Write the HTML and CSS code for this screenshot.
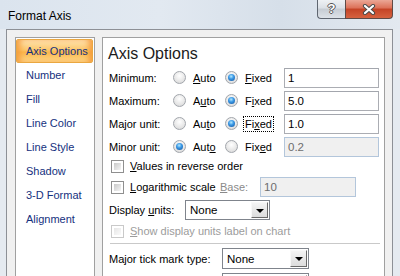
FILE: index.html
```html
<!DOCTYPE html>
<html>
<head>
    <meta name="viewport" content="width=device-width, initial-scale=1">
    <link rel="stylesheet" href="styles.css">
</head>
<body>

<div class="window">
    <div class="titlebar">
        <span class="title">Format Axis</span>
        <div class="caption-buttons">
            <span class="btn-help">?</span>
            <span class="btn-close">
                <svg width="14" height="11" viewBox="0 0 14 11">
                    <path d="M3 2 L11 9 M11 2 L3 9" stroke="#4a4a4a" stroke-width="4.2" stroke-linecap="round" fill="none"/>
                    <path d="M3 2 L11 9 M11 2 L3 9" stroke="#ffffff" stroke-width="2.2" stroke-linecap="round" fill="none"/>
                </svg>
            </span>
        </div>
    </div>

    <div class="client">
        <ul class="nav">
            <li class="active">Axis Options</li>
            <li>Number</li>
            <li>Fill</li>
            <li>Line Color</li>
            <li>Line Style</li>
            <li>Shadow</li>
            <li>3-D Format</li>
            <li>Alignment</li>
        </ul>

        <div class="panel">
            <div class="panel-title">Axis Options</div>

            <div class="bounds">
                <span class="lbl">Minimum:</span>
                <span class="radio"></span>
                <span class="opt-auto"><u>A</u>uto</span>
                <span class="radio on"></span>
                <span class="opt-fixed"><span><u>F</u>ixed</span></span>
                <span class="field">1</span>

                <span class="lbl">Maximum:</span>
                <span class="radio"></span>
                <span class="opt-auto">A<u>u</u>to</span>
                <span class="radio on"></span>
                <span class="opt-fixed"><span>F<u>i</u>xed</span></span>
                <span class="field">5.0</span>

                <span class="lbl">Major unit:</span>
                <span class="radio"></span>
                <span class="opt-auto">Au<u>t</u>o</span>
                <span class="radio on"></span>
                <span class="opt-fixed"><span class="focus">Fi<u>x</u>ed</span></span>
                <span class="field">1.0</span>

                <span class="lbl">Minor unit:</span>
                <span class="radio on"></span>
                <span class="opt-auto">Aut<u>o</u></span>
                <span class="radio"></span>
                <span class="opt-fixed"><span>Fix<u>e</u>d</span></span>
                <span class="field disabled">0.2</span>
            </div>

            <div class="row row-values">
                <span class="check"></span>
                <span><u>V</u>alues in reverse order</span>
            </div>

            <div class="row row-log">
                <span class="check"></span>
                <span class="log-text"><u>L</u>ogarithmic scale</span>
                <span class="base-lbl"><u>B</u>ase:</span>
                <span class="field disabled base-field">10</span>
            </div>

            <div class="row row-units">
                <span class="units-lbl">Display <u>u</u>nits:</span>
                <span class="select units-select">
                    <span class="select-text">None</span>
                    <span class="select-btn"></span>
                </span>
            </div>

            <div class="row row-show">
                <span class="check off"></span>
                <span class="muted"><u>S</u>how display units label on chart</span>
            </div>

            <div class="separator"></div>

            <div class="row row-tick">
                <span class="tick-lbl">Ma<u>j</u>or tick mark type:</span>
                <span class="select tick-select">
                    <span class="select-text">None</span>
                    <span class="select-btn"></span>
                </span>
            </div>

            <!-- next row only peeks in at the bottom edge -->
            <div class="row row-tick">
                <span class="tick-lbl"></span>
                <span class="select tick-select">
                    <span class="select-text"></span>
                    <span class="select-btn"></span>
                </span>
            </div>
        </div>
    </div>
</div>

</body>
</html>
```

FILE: styles.css
```css
* {box-sizing: border-box;}
body {
    margin: 0;
    font-family: "Liberation Sans", Arial, sans-serif;
    font-size: 11px;
    color: #000;
}
u {text-decoration: underline; text-underline-offset: 1px;}

/* Window frame */
.window {
    width: 400px;
    height: 276px;
    overflow: hidden;
    background: #e5eaf0;
    padding: 0 7px 0 6px;
}

.titlebar {
    height: 29px;
    margin: 0 -7px 0 -6px;
    padding: 0 7px 0 8px;
    display: flex;
    justify-content: space-between;
    align-items: flex-start;
    background: linear-gradient(to right, #dbe4ee, #e2e9f1 40%, #d6dfe9 70%, #e3e9f0);
}
.title {
    font-size: 12px;
    color: #000;
    margin-top: 9px;
}
.caption-buttons {
    display: flex;
    height: 19px;
}
.btn-help {
    width: 28px;
    height: 19px;
    border: 1px solid #5f6670;
    border-top: none;
    border-right: none;
    border-radius: 0 0 0 4px;
    background: linear-gradient(#eef1f4, #dbe0e6 45%, #c6ccd3 50%, #dde2e8);
    color: #fff;
    font-weight: bold;
    font-size: 13px;
    line-height: 18px;
    text-align: center;
    text-shadow: 1px 0 0 #555, -1px 0 0 #555, 0 1px 0 #555, 0 -1px 0 #555;
}
.btn-close {
    width: 48px;
    height: 19px;
    border: 1px solid #5f4a46;
    border-top: none;
    border-radius: 0 0 4px 0;
    background: linear-gradient(#eba796, #dc7057 45%, #c44326 50%, #d6623f);
    display: flex;
    align-items: center;
    justify-content: center;
}

/* Client area */
.client {
    height: 247px;
    overflow: hidden;
    background: #f0f0f0;
    border: 1px solid #8d9096;
    border-bottom: none;
    padding: 7px 7px 0 8px;
    display: flex;
    gap: 7px;
    align-items: flex-start;
}

/* Left category list */
.nav {
    list-style: none;
    margin: 0;
    padding: 1px 1px 0 0;
    width: 80px;
    height: 260px;
    flex: none;
    background: #fff;
    border: 1px solid #a0a0a0;
}
.nav li {
    height: 24px;
    line-height: 24px;
    padding-left: 10px;
    color: #15317e;
    white-space: nowrap;
}
.nav li.active {
    border: 1px solid #eaa740;
    border-radius: 2px;
    line-height: 22px;
    padding-left: 9px;
    background: linear-gradient(#fee4b4, #fcc86c 45%, #fab74b 55%, #fdd88a);
    box-shadow: inset 6px 0 6px -3px #f59b3c, inset -6px 0 6px -3px #f59b3c;
}

/* Right options panel */
.panel {
    width: 283px;
    height: 260px;
    flex: none;
    background: #fff;
    border: 1px solid #a0a0a0;
    padding: 5px 4px 0 6px;
}
.panel-title {
    margin-left: -1px;
    height: 23px;
    line-height: 21px;
    font-size: 16px;
    color: #1b1b1b;
}

.bounds {
    display: grid;
    grid-template-columns: 64px 13px 39px 13px 46px 95px;
    grid-auto-rows: 23px;
    align-items: center;
}
.opt-auto {padding-left: 7px;}
.opt-fixed {padding-left: 7px;}
.focus {
    outline: 1px dotted #000;
    outline-offset: 1px;
}

.radio {
    width: 13px;
    height: 13px;
    border-radius: 50%;
    border: 1px solid #a2a6ac;
    background: radial-gradient(circle at 50% 35%, #ffffff, #e6e6e6 60%, #d2d2d2);
    position: relative;
}
.radio.on::after {
    content: "";
    position: absolute;
    left: 2px;
    top: 2px;
    width: 7px;
    height: 7px;
    border-radius: 50%;
    background: radial-gradient(circle at 45% 35%, #b4eaff 0, #3d9ae6 40%, #0e4f9a 100%);
}

.field {
    height: 20px;
    border: 1px solid #abadb3;
    border-top-color: #a3a6ad;
    background: #fff;
    padding-left: 3px;
    line-height: 18px;
    font-size: 11.5px;
}
.field.disabled {
    background: #f0f0f0;
    border-color: #b3c6db;
    color: #6d6d6d;
}

.row {
    display: flex;
    align-items: center;
}
.row-values {height: 16px; margin-top: 0;}
.row-log {height: 20px; margin-top: 3px;}
.row-units {height: 20px; margin-top: 3px;}
.row-show {height: 16px; margin-top: 3px;}
.row-tick {height: 21px; margin-top: 4px;}

.check {
    width: 13px;
    height: 13px;
    margin: 0 6px 0 2px;
    flex: none;
    border: 1px solid #8f8f8f;
    padding: 2px;
    background: linear-gradient(135deg, #c9c9c9, #f5f5f5) content-box, #fff;
}
.check.off {
    border-color: #c9c9c9;
    background: linear-gradient(135deg, #e6e6e6, #fafafa) content-box, #fff;
}
.muted {color: #9c9c9c;}

.log-text {width: 90px;}
.base-lbl {width: 40px; color: #8a8a8a;}
.base-field {width: 96px; border-color: #b9b9b9;}

.units-lbl {width: 76px;}
.tick-lbl {width: 113px; flex: none;}

.select {
    height: 100%;
    display: flex;
    align-items: stretch;
    border: 1px solid #7f848c;
    background: #fff;
    padding: 1px;
}
.units-select {width: 85px;}
.tick-select {width: 87px;}
.select-text {
    flex: 1;
    padding-left: 3px;
    display: flex;
    align-items: center;
    font-size: 11.5px;
}
.select-btn {
    width: 17px;
    border: 1px solid;
    border-color: #f8f8f8 #6a6a6a #6a6a6a #f8f8f8;
    background: linear-gradient(#f4f4f4, #dcdcdc);
    display: flex;
    align-items: center;
    justify-content: center;
}
.select-btn::before {
    content: "";
    border-left: 4px solid transparent;
    border-right: 4px solid transparent;
    border-top: 4px solid #000;
    margin-top: 1px;
}

.separator {
    height: 1px;
    margin: 4px 0 0 1px;
    background: #c9c9c9;
}
```
